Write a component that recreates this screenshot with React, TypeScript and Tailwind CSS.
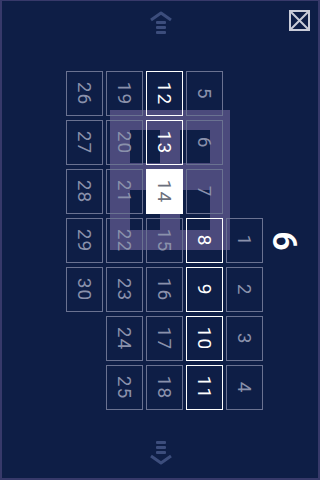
import React from 'react';

type Day = { n: number; state?: 'sel' | 'today' } | null;

const columns: Day[][] = [
  [{ n: 26 }, { n: 27 }, { n: 28 }, { n: 29 }, { n: 30 }, null, null],
  [{ n: 19 }, { n: 20 }, { n: 21 }, { n: 22 }, { n: 23 }, { n: 24 }, { n: 25 }],
  [{ n: 12, state: 'sel' }, { n: 13, state: 'sel' }, { n: 14, state: 'today' }, { n: 15 }, { n: 16 }, { n: 17 }, { n: 18 }],
  [{ n: 5 }, { n: 6 }, { n: 7 }, { n: 8, state: 'sel' }, { n: 9, state: 'sel' }, { n: 10, state: 'sel' }, { n: 11, state: 'sel' }],
  [null, null, null, { n: 1 }, { n: 2 }, { n: 3 }, { n: 4 }],
];

function Cell({ day }: { day: Day }) {
  if (!day) return <div className="w-[37px] h-[45px]" />;
  const base = 'w-[37px] h-[45px] flex items-center justify-center border';
  const cls =
    day.state === 'today'
      ? 'bg-white border-white text-[#6b6f7c]'
      : day.state === 'sel'
        ? 'border-white text-white'
        : 'border-[#6a7291] text-[#8a91ab]';
  return (
    <div className={`${base} ${cls}`}>
      <span className="rotate-90 text-[19px] leading-none tracking-[1px]">{day.n}</span>
    </div>
  );
}

function UpArrow() {
  return (
    <svg width="26" height="28" viewBox="0 0 26 28" fill="none">
      <path d="M3 10 L13 3 L23 10" stroke="#3c4d7c" strokeWidth="3" strokeLinejoin="round" />
      <rect x="8" y="11" width="10" height="3" rx="1" fill="#3c4d7c" />
      <rect x="8" y="16" width="10" height="3" rx="1" fill="#3c4d7c" />
      <rect x="8" y="21" width="10" height="3" rx="1" fill="#3c4d7c" />
    </svg>
  );
}

function DownArrow() {
  return (
    <svg width="26" height="28" viewBox="0 0 26 28" fill="none">
      <rect x="8" y="2" width="10" height="3" rx="1" fill="#3c4d7c" />
      <rect x="8" y="7" width="10" height="3" rx="1" fill="#3c4d7c" />
      <rect x="8" y="12" width="10" height="3" rx="1" fill="#3c4d7c" />
      <path d="M3 17 L13 24 L23 17" stroke="#3c4d7c" strokeWidth="3" strokeLinejoin="round" />
    </svg>
  );
}

export default function App() {
  return (
    <div
      className="relative w-[320px] h-[480px] bg-[#0e1e46] border-2 border-t border-[#37396a] overflow-hidden"
      style={{ fontFamily: 'Roboto, "DejaVu Sans", sans-serif' }}
    >
      {/* window overlay behind the grid */}
      <div className="absolute left-[108px] top-[109px] w-[120px] h-[140px] bg-[#4b4a7c] p-[20px] grid grid-cols-2 grid-rows-[33px_40px] gap-x-[20px] gap-y-[27px]">
        <div className="bg-[#0e1e46]" />
        <div className="bg-[#0e1e46]" />
        <div className="bg-[#0e1e46]" />
        <div className="bg-[#0e1e46]" />
      </div>

      <button className="absolute right-[8px] top-[9px] w-[21px] h-[21px]">
        <svg width="21" height="21" viewBox="0 0 21 21" fill="none">
          <rect x="1" y="1" width="19" height="19" stroke="#c9ccd8" strokeWidth="2" />
          <path d="M2 2 L19 19 M19 2 L2 19" stroke="#c9ccd8" strokeWidth="2" />
        </svg>
      </button>

      <div className="relative flex flex-col">
        <div className="flex justify-center pl-[2px] pt-[9px] h-[70px]">
          <UpArrow />
        </div>
        <div className="flex items-center pl-[64px]">
          <div className="flex gap-x-[3px]">
            {columns.map((col, i) => (
              <div key={i} className="flex flex-col gap-y-[4px]">
                {col.map((d, j) => (
                  <Cell key={j} day={d} />
                ))}
              </div>
            ))}
          </div>
          <span className="ml-[12px] rotate-90 text-[34px] font-semibold text-white leading-none">6</span>
        </div>
        <div className="flex justify-center pl-[2px] pt-[29px]">
          <DownArrow />
        </div>
      </div>
    </div>
  );
}
